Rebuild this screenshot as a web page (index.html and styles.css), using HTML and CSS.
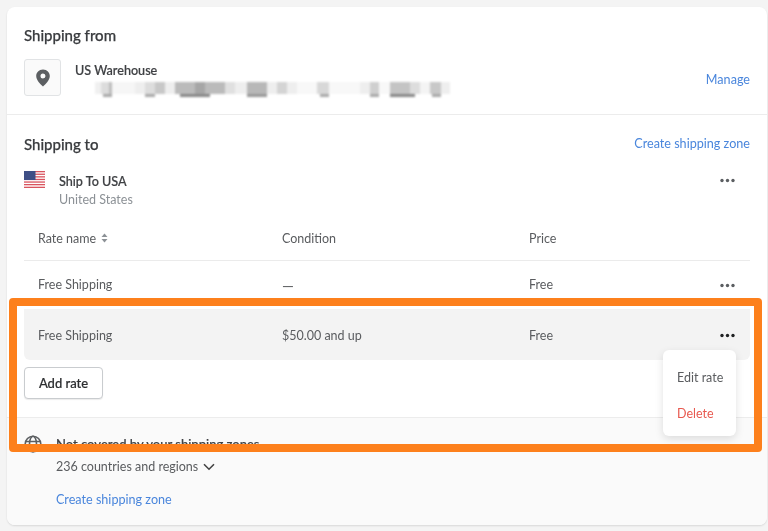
FILE: index.html
```html
<!DOCTYPE html>
<html lang="en">
<head>
<meta charset="utf-8">
<title>Shipping</title>
<link rel="stylesheet" href="styles.css">
</head>
<body>
<main class="card">
  <section class="from">
    <h2 class="title">Shipping from</h2>
    <div class="origin">
      <div class="pin-box">
        <svg width="16" height="18" viewBox="0 0 16 18"><path fill-rule="evenodd" fill="#5c5f62" d="M8 0.5C3.9 0.5 1.2 3.5 1.2 7.1c0 4 4.2 8.300 6.800 10.400 2.600-2.100 6.800-6.400 6.800-10.400C14.800 3.500 12.100 0.500 8 0.500zM8 9.500a2.500 2.500 0 1 1 0-5 2.500 2.500 0 0 1 0 5z"/></svg>
      </div>
      <div class="origin-text">
        <div class="strong">US Warehouse</div>
        <div class="address"></div>
      </div>
      <a class="link manage">Manage</a>
    </div>
  </section>

  <section class="to">
    <div class="to-head">
      <h2 class="title">Shipping to</h2>
      <a class="link">Create shipping zone</a>
    </div>
    <div class="zone">
      <svg class="flag" width="21" height="17" viewBox="0 0 21 17">
        <rect width="21" height="17" fill="#fff"/>
        <g fill="#d9545f">
          <rect y="0" width="21" height="1.300"/><rect y="2.600" width="21" height="1.300"/><rect y="5.200" width="21" height="1.300"/><rect y="7.800" width="21" height="1.300"/><rect y="10.400" width="21" height="1.300"/><rect y="13" width="21" height="1.300"/><rect y="15.700" width="21" height="1.300"/>
        </g>
        <rect width="11.500" height="9" fill="#3f4f86"/>
      </svg>
      <div class="zone-text">
        <div class="strong">Ship To USA</div>
        <div class="muted">United States</div>
      </div>
      <svg class="dots" width="15" height="5" viewBox="0 0 15 5" fill="#5c5f62"><circle cx="2" cy="2.500" r="1.700"/><circle cx="7.500" cy="2.500" r="1.700"/><circle cx="13" cy="2.500" r="1.700"/></svg>
    </div>

    <div class="rates">
      <div class="row head">
        <div class="name-cell">Rate name
          <svg class="sort" width="7" height="10" viewBox="0 0 7 10" fill="#8c9196"><path d="M3.500 0.500L6.500 4H0.500z"/><path d="M3.500 9.500L0.500 6H6.500z"/></svg>
        </div>
        <div>Condition</div>
        <div>Price</div>
      </div>
      <div class="row plain">
        <div>Free Shipping</div>
        <div class="dash">—</div>
        <div>Free</div>
        <svg class="dots" width="15" height="5" viewBox="0 0 15 5" fill="#5c5f62"><circle cx="2" cy="2.500" r="1.700"/><circle cx="7.500" cy="2.500" r="1.700"/><circle cx="13" cy="2.500" r="1.700"/></svg>
      </div>
      <div class="row active">
        <div>Free Shipping</div>
        <div>$50.00 and up</div>
        <div>Free</div>
        <svg class="dots" width="15" height="5" viewBox="0 0 15 5" fill="#202223"><circle cx="2" cy="2.500" r="1.700"/><circle cx="7.500" cy="2.500" r="1.700"/><circle cx="13" cy="2.500" r="1.700"/></svg>
      </div>
    </div>
    <button class="add">Add rate</button>
  </section>

  <section class="uncovered">
    <svg class="globe" width="18" height="18" viewBox="0 0 18 18" fill="none" stroke="#5c5f62" stroke-width="1.600">
      <circle cx="9" cy="9" r="7.800"/><ellipse cx="9" cy="9" rx="3.500" ry="7.800"/><path d="M1.500 6.500h15M1.500 11.500h15"/>
    </svg>
    <div class="uncovered-text">
      <div class="strong wide">Not covered by your shipping zones</div>
      <div class="countries">236 countries and regions
        <svg width="12" height="8" viewBox="0 0 12 8" fill="none" stroke="#444" stroke-width="1.600"><path d="M1 1.200l5 5 5-5"/></svg>
      </div>
      <a class="link create">Create shipping zone</a>
    </div>
  </section>

  <div class="menu">
    <div class="menu-item">Edit rate</div>
    <div class="menu-item danger">Delete</div>
  </div>
</main>
<div class="highlight"></div>
</body>
</html>
```

FILE: styles.css
```css
* { box-sizing: border-box; }
html, body { margin: 0; height: 100%; }
body {
  background: #f4f4f4;
  padding: 7px 1px 0 7px;
  font-family: "Lato", "Open Sans", sans-serif;
  font-size: 12.500px;
  line-height: 20px;
  color: #5a5c5f;
  overflow: hidden;
}
.card {
  position: relative;
  height: 518px;
  background: #fff;
  border-radius: 8px;
  box-shadow: 0 1px 2px rgba(0,0,0,.12);
  overflow: hidden;
  filter: blur(0.3px);
}
.title {
  margin: 0;
  font-size: 15px;
  line-height: 20px;
  font-weight: 500;
  color: #3a3c3f;
  -webkit-text-stroke: 0.25px #3a3c3f;
}
.strong { color: #3f4144; font-size: 12.600px; font-weight: 500; -webkit-text-stroke: 0.2px #3f4144; }
.wide { font-size: 13px; }
.muted { color: #8c9196; line-height: 18px; }
.link { color: #4a86dc; font-size: 12.600px; }
.dash { font-size: 15px; }

.from {
  padding: 18px 17px 18px;
  height: 108px;
  border-bottom: 1px solid #ececec;
}
.origin { display: flex; margin-top: 14px; }
.pin-box {
  width: 37px;
  height: 37px;
  border: 1px solid #e1e3e5;
  border-radius: 3px;
  background: #fafafa;
  display: flex;
  align-items: center;
  justify-content: center;
}
.origin-text { margin-left: 14px; flex: 1; }
.origin-text .strong { margin-top: 2px; }
.address {
  width: 375px;
  height: 19px;
  margin-top: 1px;
  filter: blur(1.200px);
  background:
    linear-gradient(90deg,
      transparent 0 20px, #f0f0f0 20px 26px, #dcdcdc 26px 34px, #bdbdbd 34px 37px, #f6f6f6 37px 60px,
      #eee 60px 70px, #ddd 70px 80px, #c8c8c8 80px 90px, #eee 90px 100px, #bbb 100px 120px, #a6a6a6 120px 130px, #bbb 130px 150px,
      #e0e0e0 150px 160px, #eee 160px 172px, #b8b8b8 172px 192px, #eee 192px 202px, #d4d4d4 202px 212px, #eee 212px 222px, #f8f8f8 222px 242px,
      #d8d8d8 242px 254px, #f8f8f8 254px 285px, #eee 285px 295px, #cfcfcf 295px 304px, #f8f8f8 304px 315px,
      #c4c4c4 315px 335px, #ddd 335px 345px, #f4f4f4 345px 355px, #c8c8c8 355px 366px, #eee 366px 375px) 0 0 / 100% 12px no-repeat,
    linear-gradient(90deg,
      transparent 0 28px, #aaa 28px 37px, transparent 37px 70px, #aaa 70px 80px, transparent 80px 105px, #888 105px 135px, transparent 135px 172px,
      #999 172px 192px, transparent 192px 245px, #aaa 245px 254px, transparent 254px 295px, #aaa 295px 304px, transparent 304px 315px, #888 315px 340px, transparent 340px 357px, #aaa 357px 366px, transparent 366px) 0 12px / 100% 3px no-repeat;
}
.manage { align-self: flex-start; margin-top: 11px; }

.to { padding: 19px 17px 18px; }
.to-head { display: flex; justify-content: space-between; align-items: center; }
.zone { display: flex; align-items: flex-start; margin-top: 17px; }
.flag { flex: none; }
.zone-text { margin-left: 14px; flex: 1; }
.zone-text .strong { padding-top: 1px; }
.zone-text .muted { margin-top: -1px; }
.dots { flex: none; }
.zone .dots { margin: 7px 15px 0 0; }

.row {
  display: grid;
  grid-template-columns: 244px 247px 1fr 15px;
  align-items: center;
  padding: 0 15px 0 14px;
}
.head { height: 45px; padding-top: 2px; border-bottom: 1px solid #ebebeb; }
.name-cell { display: flex; align-items: center; gap: 5px; }
.sort { margin-top: -2px; }
.plain { height: 48px; }
.active { height: 51px; padding-top: 2px; background: #f3f3f3; border-radius: 0 0 6px 6px; }
.rates { margin-top: 7px; }

.add {
  display: block;
  margin-top: 7px;
  width: 79px;
  height: 32px;
  padding: 0;
  background: #fff;
  border: 1px solid #c9cccf;
  border-radius: 4px;
  box-shadow: 0 1px 1px rgba(0,0,0,.08);
  font: 500 13px/20px "Lato", "Open Sans", sans-serif;
  color: #2c2e30;
  -webkit-text-stroke: 0.2px #2c2e30;
}

.uncovered {
  display: flex;
  padding: 16px 17px 16px;
  background: #fafafa;
  border-top: 1px solid #ececec;
  height: 108px;
}
.globe { flex: none; margin-top: 1px; }
.uncovered-text { margin-left: 14px; }
.countries { display: flex; align-items: center; gap: 5px; margin-top: 3px; }
.create { display: block; margin-top: 13px; }

.menu {
  position: absolute;
  left: 656px;
  top: 343px;
  width: 73px;
  height: 86px;
  padding: 10px 0 0 14px;
  background: #fff;
  border-radius: 6px;
  box-shadow: 0 3px 8px rgba(0,0,0,.12);
}
.menu-item { height: 36px; display: flex; align-items: center; }
.danger { color: #e8594f; }

.highlight {
  position: absolute;
  left: 9px;
  top: 298px;
  width: 753px;
  height: 154px;
  border: 8.500px solid #fd801c;
  border-radius: 4px;
}
```
